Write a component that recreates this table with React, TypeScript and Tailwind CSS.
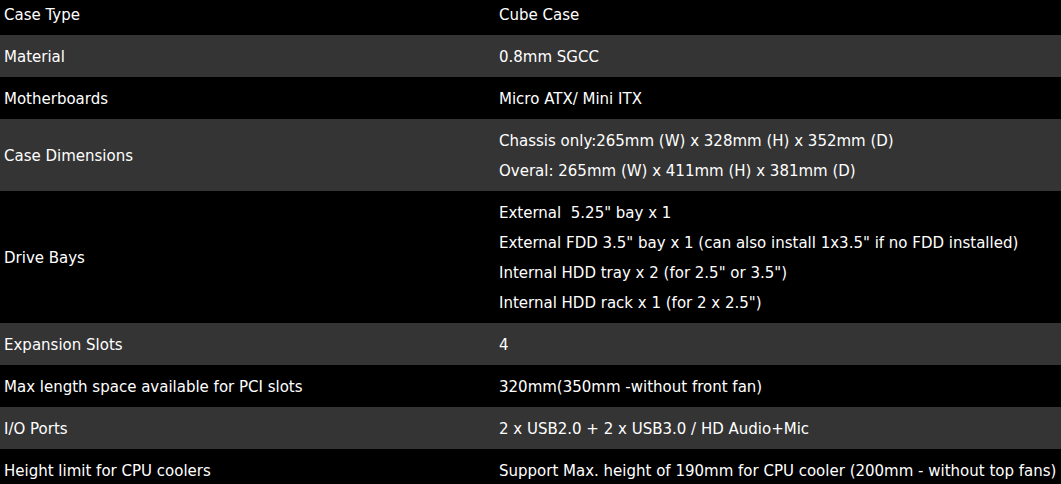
const specs: { label: string; value: string[] }[] = [
  { label: 'Case Type', value: ['Cube Case'] },
  { label: 'Material', value: ['0.8mm SGCC'] },
  { label: 'Motherboards', value: ['Micro ATX/ Mini ITX'] },
  {
    label: 'Case Dimensions',
    value: [
      'Chassis only:265mm (W) x 328mm (H) x 352mm (D)',
      'Overal: 265mm (W) x 411mm (H) x 381mm (D)',
    ],
  },
  {
    label: 'Drive Bays',
    value: [
      'External  5.25" bay x 1',
      'External FDD 3.5" bay x 1 (can also install 1x3.5" if no FDD installed)',
      'Internal HDD tray x 2 (for 2.5" or 3.5")',
      'Internal HDD rack x 1 (for 2 x 2.5")',
    ],
  },
  { label: 'Expansion Slots', value: ['4'] },
  { label: 'Max length space available for PCI slots', value: ['320mm(350mm -without front fan)'] },
  { label: 'I/O Ports', value: ['2 x USB2.0 + 2 x USB3.0 / HD Audio+Mic'] },
  {
    label: 'Height limit for CPU coolers',
    value: ['Support Max. height of 190mm for CPU cooler (200mm - without top fans)'],
  },
]

export default function App() {
  return (
    <div className="h-[484px] overflow-hidden bg-black">
      <div className="-mt-[7px] font-['DejaVu_Sans',sans-serif] text-[15px] text-white">
        {specs.map((row, i) => (
          <div
            key={row.label}
            className={`grid grid-cols-[495px_1fr] pt-[7px] pb-[5px] ${i % 2 === 1 ? 'bg-[#343434]' : 'bg-black'}`}
          >
            <div className="flex items-center px-1">{row.label}</div>
            <div className="px-1">
              {row.value.map((line) => (
                <div key={line} className="h-[30px] leading-[30px] whitespace-pre">
                  {line}
                </div>
              ))}
            </div>
          </div>
        ))}
      </div>
    </div>
  )
}
